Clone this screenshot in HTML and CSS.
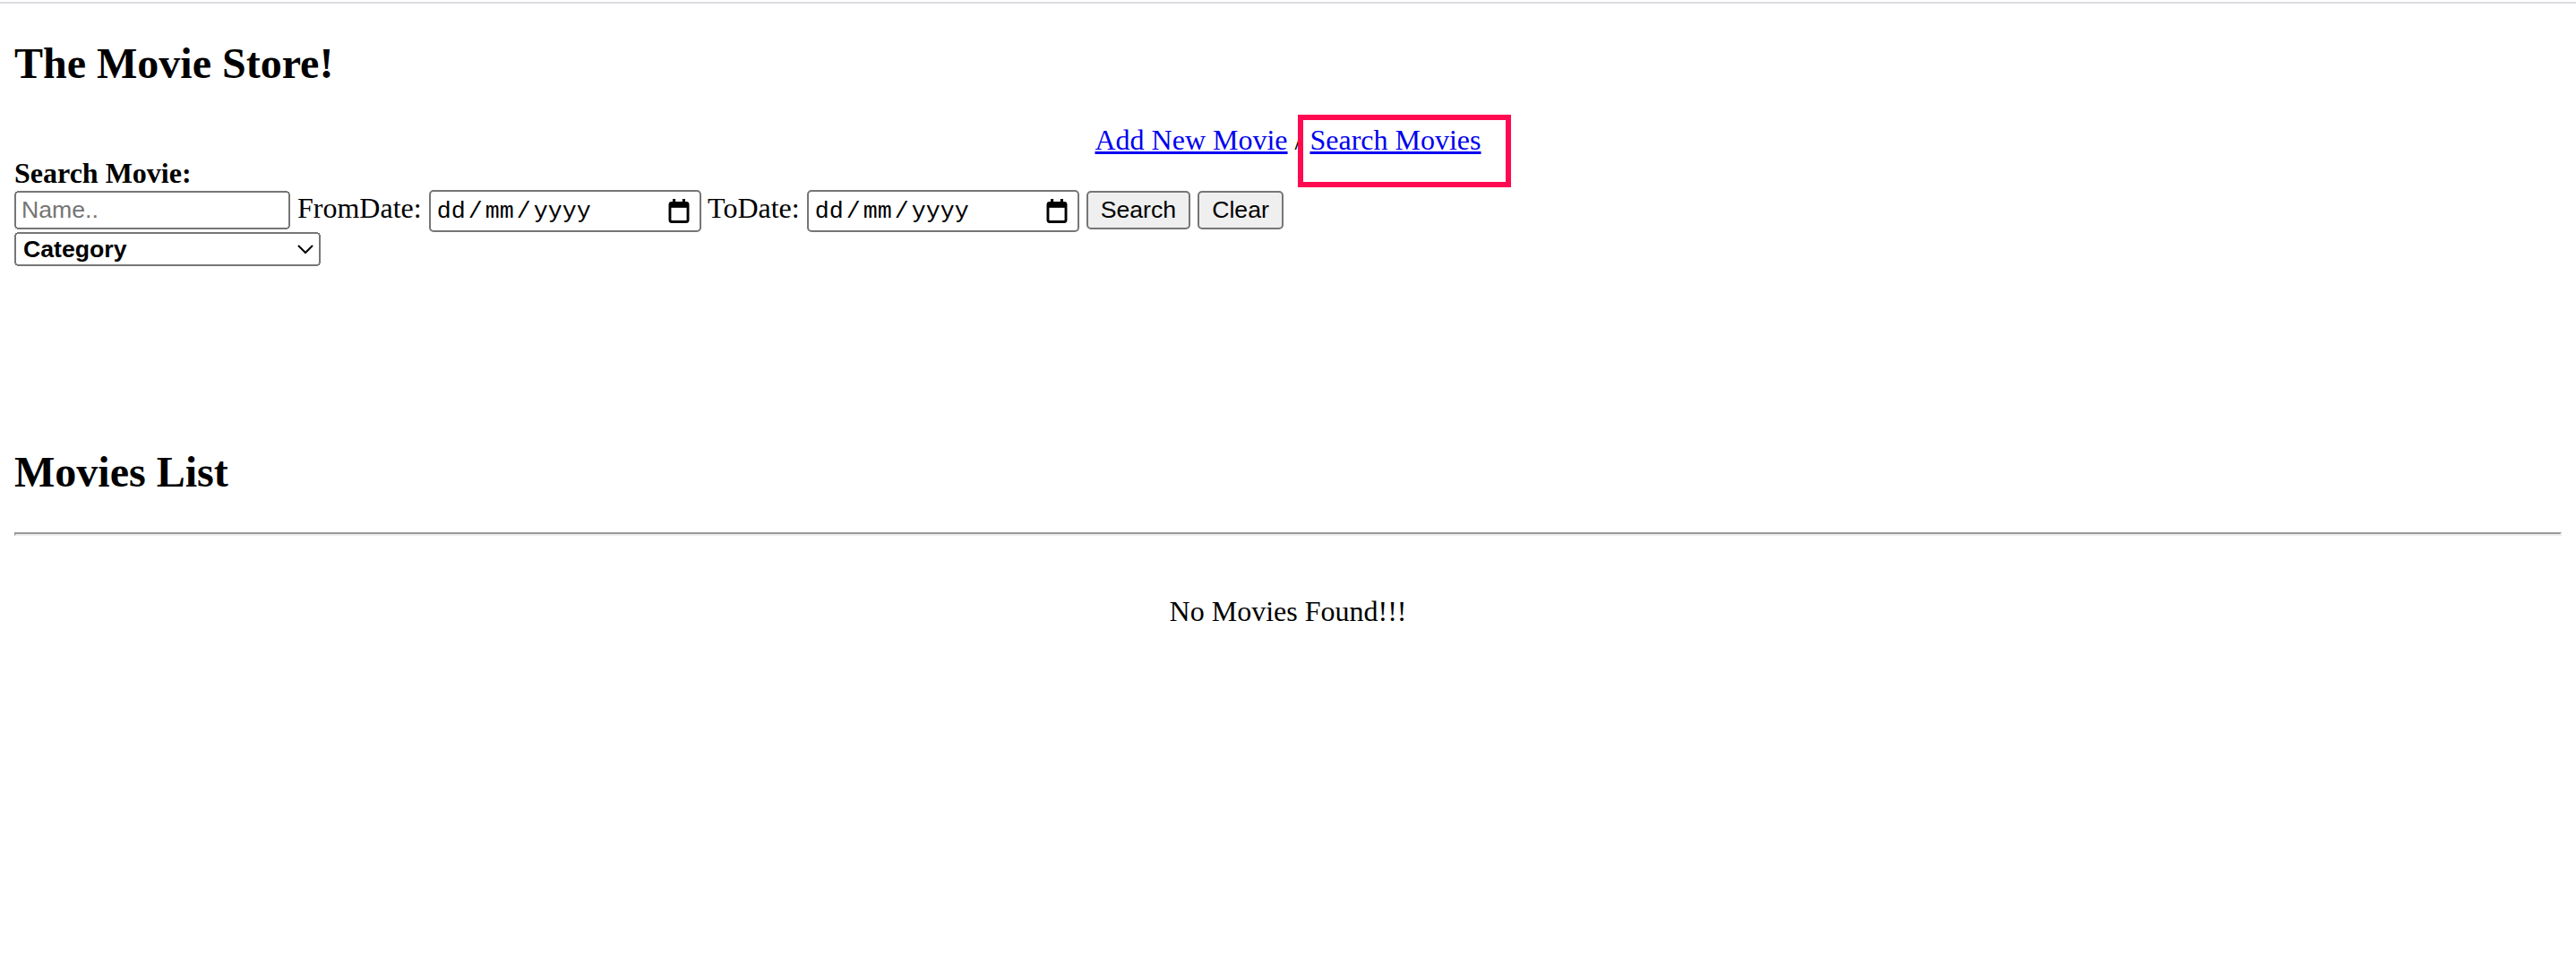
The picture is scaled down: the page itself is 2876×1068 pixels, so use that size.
FILE: index.html
```html
<!DOCTYPE html>
<html lang="en-GB">
<head>
<meta charset="utf-8">
<title>The Movie Store</title>
<link rel="stylesheet" href="styles.css">
</head>
<body class="page">
  <h2 class="title">The Movie Store!</h2>
  <div class="nav"><a href="#" class="nav-link">Add New Movie</a> / <a href="#" class="nav-link nav-link--current">Search Movies<span class="highlight"></span></a></div>
  <form class="search">
    <div class="search-label">Search Movie:</div>
    <div class="search-row"><input type="text" class="field field--name" placeholder="Name.."> FromDate: <span class="date-field" role="textbox" aria-label="FromDate"><span class="date-text">dd<span class="date-sep">/</span>mm<span class="date-sep">/</span>yyyy</span><svg class="date-icon" viewBox="0 0 12 14" width="12" height="14" aria-hidden="true"><rect x="2.4" y="0" width="1.6" height="3" fill="#000"/><rect x="8" y="0" width="1.6" height="3" fill="#000"/><rect x="0.8" y="2.3" width="10.4" height="10.9" rx="1" fill="none" stroke="#000" stroke-width="1.5"/><rect x="0.8" y="2.3" width="10.4" height="2.8" fill="#000"/></svg></span> ToDate: <span class="date-field" role="textbox" aria-label="ToDate"><span class="date-text">dd<span class="date-sep">/</span>mm<span class="date-sep">/</span>yyyy</span><svg class="date-icon" viewBox="0 0 12 14" width="12" height="14" aria-hidden="true"><rect x="2.4" y="0" width="1.6" height="3" fill="#000"/><rect x="8" y="0" width="1.6" height="3" fill="#000"/><rect x="0.8" y="2.3" width="10.4" height="10.9" rx="1" fill="none" stroke="#000" stroke-width="1.5"/><rect x="0.8" y="2.3" width="10.4" height="2.8" fill="#000"/></svg></span> <button type="button" class="btn">Search</button> <button type="button" class="btn">Clear</button></div>
    <select class="category">
      <option>Category</option>
      <option>Action</option>
      <option>Comedy</option>
      <option>Drama</option>
      <option>Horror</option>
      <option>Science Fiction</option>
    </select>
  </form>
  <h2 class="title title--list">Movies List</h2>
  <hr class="divider">
  <p class="empty">No Movies Found!!!</p>
</body>
</html>
```

FILE: styles.css
```css
html {
  background-color: #fff;
  background-image: linear-gradient(#fff 0 2px, #dcdce1 2px 4px, #fff 4px);
  background-repeat: no-repeat;
  background-size: 100% 4px;
}

.page {
  zoom: 2;
  margin: 0 8px 8px;
  padding-top: 0.1px;
  font-family: "Liberation Serif", "Times New Roman", serif;
  font-size: 16px;
  color: #000;
}

.title {
  font-size: 24px;
  font-weight: bold;
  margin: 21.6px 0 19.92px;
}

.nav {
  text-align: center;
}

.nav-link {
  color: #0000ee;
  text-decoration: underline;
}

.nav-link--current {
  position: relative;
}

.highlight {
  position: absolute;
  left: -6.5px;
  right: -16.5px;
  top: -5.2px;
  bottom: -17.5px;
  border: 3.3px solid #ff0a50;
  pointer-events: none;
}

.search {
  margin: 0 0 101px;
}

.search-label {
  font-weight: bold;
}

.field--name {
  box-sizing: border-box;
  width: 154px;
  font-family: "Liberation Sans", Arial, sans-serif;
  font-size: 13.333px;
}

.date-field {
  display: inline-flex;
  align-items: center;
  justify-content: space-between;
  box-sizing: border-box;
  width: 152px;
  height: 23.5px;
  padding: 0 5.5px 0 3.5px;
  border: 1px solid #767676;
  border-radius: 2.5px;
  background: #fff;
  font-family: "Liberation Mono", "Courier New", monospace;
  font-size: 13.333px;
  color: #000;
  vertical-align: baseline;
}

.date-sep {
  margin: 0 1.5px;
}

.date-icon {
  width: 12px;
  height: 13.5px;
  flex: none;
}

.btn {
  font-family: "Liberation Sans", Arial, sans-serif;
  font-size: 13.333px;
}

.category {
  display: block;
  width: 171px;
  font-family: "Liberation Sans", Arial, sans-serif;
  font-size: 13.333px;
  font-weight: bold;
}

.divider {
  margin: 8px 0;
}

.empty {
  text-align: center;
  margin: 33px 0 16px;
}
```
